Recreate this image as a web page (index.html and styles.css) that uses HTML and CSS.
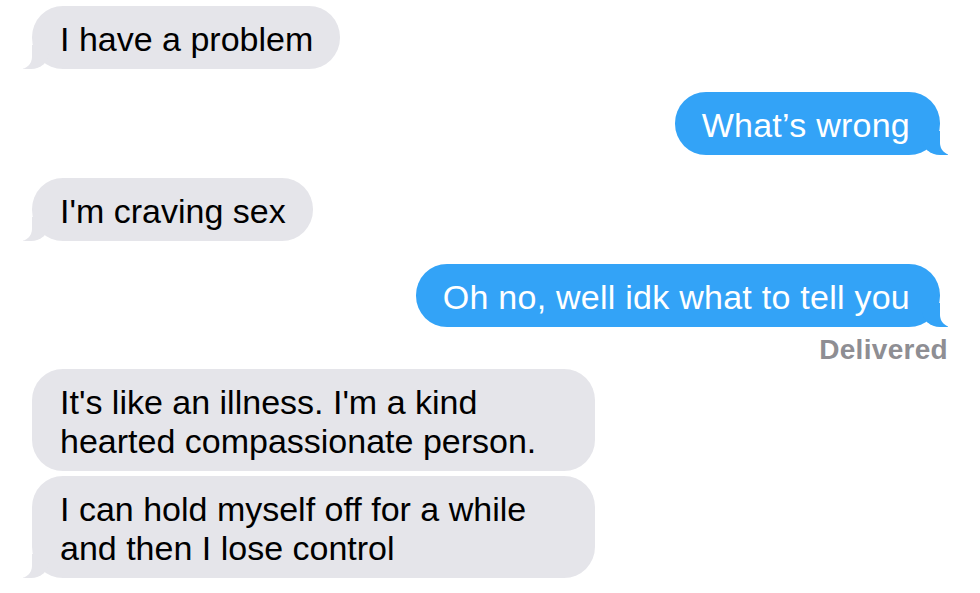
FILE: index.html
```html
<!DOCTYPE html>
<html lang="en">
<head>
    <meta charset="UTF-8">
    <meta name="viewport" content="width=device-width, initial-scale=1.0">
    <title>Messages</title>
    <link rel="stylesheet" href="styles.css">
</head>
<body>
    <div class="chat">
        <div class="msg them tail">I have a problem</div>
        <div class="msg me tail">What’s wrong</div>
        <div class="msg them tail">I'm craving sex</div>
        <div class="msg me tail">Oh no, well idk what to tell you</div>
        <div class="status">Delivered</div>
        <div class="msg them">It's like an illness. I'm a kind hearted compassionate person.</div>
        <div class="msg them tail cont">I can hold myself off for a while and then I lose control</div>
    </div>
</body>
</html>
```

FILE: styles.css
```css
body {
    margin: 0;
    background-color: #fff;
    font-family: 'Liberation Sans', Arial, sans-serif;
}
.chat {
    display: flex;
    flex-direction: column;
    align-items: flex-start;
    padding: 6px 40px 0 32px;
}
.msg {
    position: relative;
    max-width: 563px;
    box-sizing: border-box;
    padding: 14px 27px 10px 28px;
    border-radius: 31px;
    font-size: 34px;
    line-height: 39px;
    color: #000;
}
.msg + .msg {
    margin-top: 23px;
}
.msg.cont {
    margin-top: 5px;
}
.them {
    background-color: #e5e5ea;
}
.me {
    align-self: flex-end;
    background-color: #33a3f7;
    color: #fff;
    padding: 14px 30px 10px 27px;
    letter-spacing: 0.25px;
}
/* bubble tails */
.tail::before,
.tail::after {
    content: "";
    position: absolute;
    bottom: 0;
    height: 24px;
}
.them.tail::before {
    left: -9px;
    width: 26px;
    background-color: #e5e5ea;
    border-bottom-right-radius: 18px 16px;
}
.them.tail::after {
    left: -30px;
    width: 30px;
    background-color: #fff;
    border-bottom-right-radius: 12px;
}
.me.tail::before {
    right: -8px;
    width: 26px;
    background-color: #33a3f7;
    border-bottom-left-radius: 18px 16px;
}
.me.tail::after {
    right: -30px;
    width: 30px;
    background-color: #fff;
    border-bottom-left-radius: 12px;
}
.status {
    align-self: flex-end;
    margin: 8px -8px 4px 0;
    font-size: 28px;
    line-height: 30px;
    font-weight: bold;
    letter-spacing: 0.3px;
    color: #8e8e93;
}
```
